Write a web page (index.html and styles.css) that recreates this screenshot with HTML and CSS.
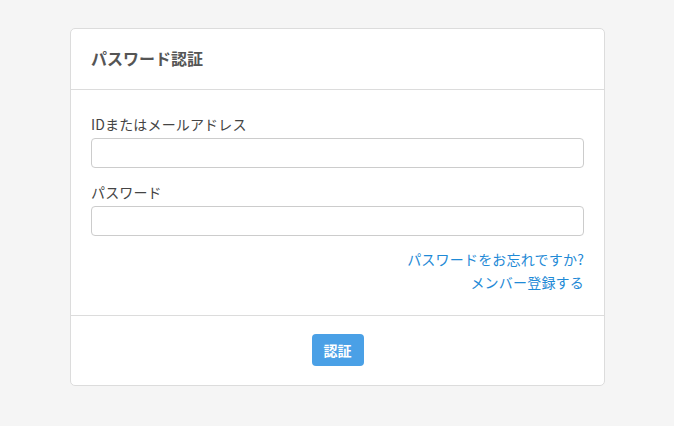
FILE: index.html
```html
<!DOCTYPE html>
<html lang="ja">
<head>
<meta charset="utf-8">
<link rel="stylesheet" href="styles.css">
</head>
<body>
<div class="card">
  <div class="card-header">パスワード認証</div>
  <div class="card-body">
    <div class="field">
      <label class="label">IDまたはメールアドレス</label>
      <input class="input" type="text">
    </div>
    <div class="field">
      <label class="label">パスワード</label>
      <input class="input" type="password">
    </div>
    <div class="links">
      <a href="#">パスワードをお忘れですか?</a>
      <a href="#">メンバー登録する</a>
    </div>
  </div>
  <div class="card-footer">
    <button class="btn">認証</button>
  </div>
</div>
</body>
</html>
```
FILE: styles.css
```css
html, body {
  margin: 0;
  padding: 0;
  background: #f5f5f5;
  font-family: "Noto Sans CJK JP", "Noto Sans", sans-serif;
  color: #444;
}
body {
  padding-top: 28px;
}
.card {
  width: 533px;
  margin-left: 70px;
  background: #fff;
  border: 1px solid #dcdcdc;
  border-radius: 5px;
}
.card-header {
  padding: 19px 20px 20px;
  font-size: 16px;
  line-height: 21px;
  font-weight: bold;
  color: #555;
  border-bottom: 1px solid #dcdcdc;
}
.card-body {
  padding: 24px 20px 21px;
}
.field {
  display: flex;
  flex-direction: column;
  gap: 4px;
  margin-bottom: 14px;
}
.label {
  font-size: 14px;
  line-height: 20px;
  color: #444;
  letter-spacing: 0.15px;
}
.input {
  box-sizing: border-box;
  height: 30px;
  width: 100%;
  border: 1px solid #ccc;
  border-radius: 4px;
  margin: 0;
  padding: 0 8px;
}
.links {
  display: flex;
  flex-direction: column;
  align-items: flex-end;
  margin-top: -2px;
}
.links a {
  font-size: 14px;
  line-height: 23px;
  color: #1f8ad6;
  text-decoration: none;
  letter-spacing: 0.2px;
}
.card-footer {
  border-top: 1px solid #dcdcdc;
  padding: 18px 0 19px;
  display: flex;
  justify-content: center;
}
.btn {
  width: 52px;
  height: 32px;
  border: none;
  border-radius: 4px;
  background: #4aa0e6;
  color: #fff;
  font-family: "Noto Sans CJK JP", sans-serif;
  font-size: 14px;
  font-weight: bold;
  padding: 0;
}
```
